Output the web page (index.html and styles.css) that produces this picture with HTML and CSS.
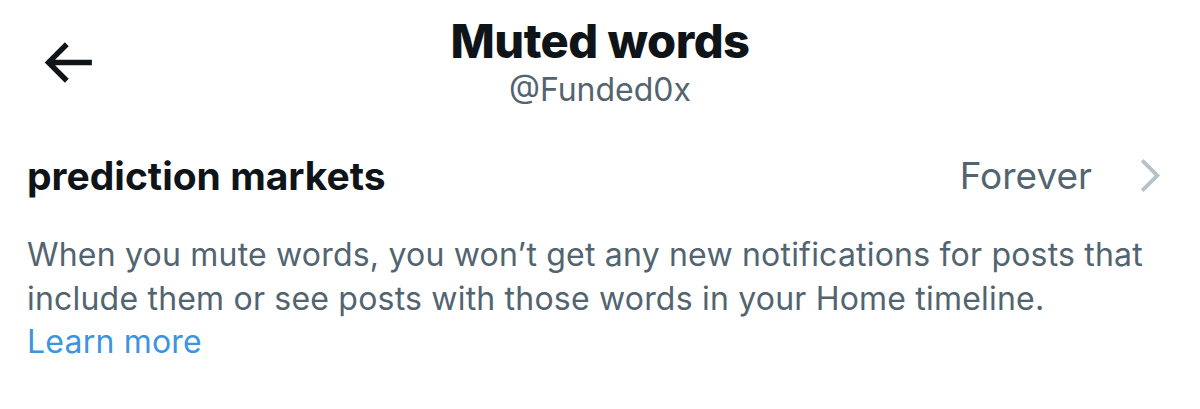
FILE: index.html
```html
<!DOCTYPE html>
<html lang="en">
<head>
    <meta charset="UTF-8">
    <meta name="viewport" content="width=device-width, initial-scale=1.0">
    <title>Muted words</title>
    <link rel="stylesheet" href="styles.css">
</head>
<body>

    <!-- Header -->
    <div class="header">
        <button class="back-button" aria-label="Back">
            <svg viewBox="0 0 24 24" width="65" height="65">
                <path d="M7.414 13l5.043 5.04-1.414 1.42L3.586 12l7.457-7.46 1.414 1.42L7.414 11H21v2H7.414z"></path>
            </svg>
        </button>
        <div class="header-title">
            <h1>Muted words</h1>
            <div class="handle">@Funded0x</div>
        </div>
    </div>

    <!-- Muted word row -->
    <div class="word-row">
        <div class="word">prediction markets</div>
        <div class="duration">
            <span>Forever</span>
            <svg class="chevron" viewBox="0 0 24 24" width="47" height="47">
                <path d="M14.586 12L7.543 4.96l1.414-1.42L17.414 12l-8.457 8.46-1.414-1.42L14.586 12z"></path>
            </svg>
        </div>
    </div>

    <p class="info">
        When you mute words, you won’t get any new notifications for posts that include them or see posts with those words in your Home timeline.
        <a href="#">Learn more</a>
    </p>

</body>
</html>
```

FILE: styles.css
```css
body {
    margin: 0;
    padding: 0;
    background: #ffffff;
    color: #0f1419;
    font-family: Inter, "Noto Sans", sans-serif;
}

.header {
    position: relative;
    height: 130px;
    display: flex;
    justify-content: center;
}

.back-button {
    position: absolute;
    left: 35px;
    top: 30px;
    padding: 0;
    border: none;
    background: none;
    cursor: pointer;
}

.back-button svg {
    display: block;
    fill: #0f1419;
}

.header-title {
    text-align: center;
    padding-top: 14px;
}

.header-title h1 {
    margin: 0;
    font-size: 47px;
    font-weight: 800;
    line-height: 54px;
    letter-spacing: -0.5px;
}

.handle {
    font-size: 32px;
    line-height: 40px;
    color: #536471;
    margin-top: 2px;
}

.word-row {
    display: flex;
    align-items: center;
    justify-content: space-between;
    padding: 22px 27px 0 27px;
}

.word {
    font-size: 39px;
    font-weight: 700;
}

.duration {
    display: flex;
    align-items: center;
    gap: 34px;
    font-size: 37px;
    color: #536471;
}

.chevron {
    display: block;
    fill: #b9c1c8;
}

.info {
    margin: 34px 30px 0 27px;
    font-size: 32px;
    line-height: 43.5px;
    letter-spacing: 0.2px;
    color: #536471;
}

.info a {
    display: block;
    color: #3d95dd;
    text-decoration: none;
}
```
